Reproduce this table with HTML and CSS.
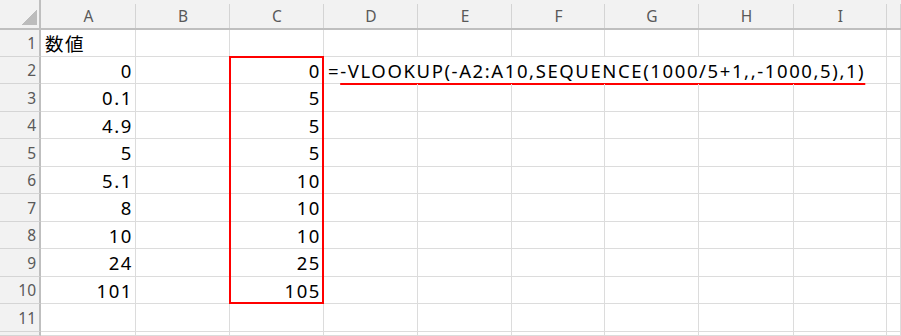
FILE: index.html
```html
<!DOCTYPE html>
<html lang="ja">
<head>
    <meta charset="UTF-8">
    <title>数値</title>
    <link rel="stylesheet" href="styles.css">
</head>
<body>
    <div class="sheet">
        <!-- column headers -->
        <div class="corner"></div>
        <div class="col-head">A</div><div class="col-head">B</div><div class="col-head">C</div>
        <div class="col-head">D</div><div class="col-head">E</div><div class="col-head">F</div>
        <div class="col-head">G</div><div class="col-head">H</div><div class="col-head">I</div>
        <div class="col-head"></div>

        <div class="row-head">1</div>
        <div class="cell">数値</div><div class="cell"></div><div class="cell"></div><div class="cell"></div><div class="cell"></div>
        <div class="cell"></div><div class="cell"></div><div class="cell"></div><div class="cell"></div><div class="cell"></div>

        <div class="row-head">2</div>
        <div class="cell num">0</div><div class="cell"></div>
        <div class="cell num result">0<div class="highlight"></div></div>
        <div class="cell formula">=<span class="marked">-VLOOKUP(-A2:A10,SEQUENCE(1000/5+1,,-1000,5),1)</span></div>
        <div class="cell"></div>

        <div class="row-head">3</div>
        <div class="cell num">0.1</div><div class="cell"></div><div class="cell num">5</div><div class="cell"></div><div class="cell"></div>
        <div class="cell"></div><div class="cell"></div><div class="cell"></div><div class="cell"></div><div class="cell"></div>

        <div class="row-head">4</div>
        <div class="cell num">4.9</div><div class="cell"></div><div class="cell num">5</div><div class="cell"></div><div class="cell"></div>
        <div class="cell"></div><div class="cell"></div><div class="cell"></div><div class="cell"></div><div class="cell"></div>

        <div class="row-head">5</div>
        <div class="cell num">5</div><div class="cell"></div><div class="cell num">5</div><div class="cell"></div><div class="cell"></div>
        <div class="cell"></div><div class="cell"></div><div class="cell"></div><div class="cell"></div><div class="cell"></div>

        <div class="row-head">6</div>
        <div class="cell num">5.1</div><div class="cell"></div><div class="cell num">10</div><div class="cell"></div><div class="cell"></div>
        <div class="cell"></div><div class="cell"></div><div class="cell"></div><div class="cell"></div><div class="cell"></div>

        <div class="row-head">7</div>
        <div class="cell num">8</div><div class="cell"></div><div class="cell num">10</div><div class="cell"></div><div class="cell"></div>
        <div class="cell"></div><div class="cell"></div><div class="cell"></div><div class="cell"></div><div class="cell"></div>

        <div class="row-head">8</div>
        <div class="cell num">10</div><div class="cell"></div><div class="cell num">10</div><div class="cell"></div><div class="cell"></div>
        <div class="cell"></div><div class="cell"></div><div class="cell"></div><div class="cell"></div><div class="cell"></div>

        <div class="row-head">9</div>
        <div class="cell num">24</div><div class="cell"></div><div class="cell num">25</div><div class="cell"></div><div class="cell"></div>
        <div class="cell"></div><div class="cell"></div><div class="cell"></div><div class="cell"></div><div class="cell"></div>

        <div class="row-head">10</div>
        <div class="cell num">101</div><div class="cell"></div><div class="cell num">105</div><div class="cell"></div><div class="cell"></div>
        <div class="cell"></div><div class="cell"></div><div class="cell"></div><div class="cell"></div><div class="cell"></div>

        <div class="row-head">11</div>
        <div class="cell"></div><div class="cell"></div><div class="cell"></div><div class="cell"></div><div class="cell"></div>
        <div class="cell"></div><div class="cell"></div><div class="cell"></div><div class="cell"></div><div class="cell"></div>

        <div class="row-head"></div>
        <div class="cell"></div><div class="cell"></div><div class="cell"></div><div class="cell"></div><div class="cell"></div>
        <div class="cell"></div><div class="cell"></div><div class="cell"></div><div class="cell"></div><div class="cell"></div>
    </div>
</body>
</html>
```

FILE: styles.css
```css
body {
    margin: 0;
    padding: 0;
    background-color: #fff;
    overflow: hidden;
    font-family: "Noto Sans", "Noto Sans CJK JP", sans-serif;
}

.sheet {
    display: grid;
    grid-template-columns: 41px 95px 94px 94px 94px 94px 93px 94px 95px 93px minmax(0, 1fr);
    grid-template-rows: 30px 27px 27px 28px 27px 28px 27px 28px 27px 28px 27px 28px minmax(0, 1fr);
    width: 901px;
    height: 336px;
    overflow: hidden;
}

.sheet > div {
    box-sizing: border-box;
    display: flex;
    align-items: center;
    white-space: nowrap;
    min-width: 0;
    min-height: 0;
}

/* headers */
.corner {
    background: #f2f2f2 linear-gradient(to bottom right, transparent 50%, #bcbcbc 50%) no-repeat right 2px bottom 3px / 15px 15px;
    border-right: 2px solid #bfbfbf;
    border-bottom: 2px solid #bfbfbf;
}

.col-head {
    justify-content: center;
    padding-top: 4px;
    font-size: 15.5px;
    color: #595959;
    background: #f2f2f2 linear-gradient(#d4d4d4, #d4d4d4) no-repeat right bottom / 1px calc(100% - 4px);
    border-bottom: 2px solid #bfbfbf;
}

.row-head {
    justify-content: flex-end;
    padding-right: 3px;
    font-size: 15.5px;
    color: #595959;
    background-color: #f2f2f2;
    border-right: 2px solid #bfbfbf;
    border-bottom: 1px solid #d5d5d5;
}

/* cells */
.cell {
    padding: 0 4px;
    font-size: 18.5px;
    letter-spacing: 1.6px;
    color: #000;
    border-right: 1px solid #dcdcdc;
    border-bottom: 1px solid #dcdcdc;
}

.num {
    justify-content: flex-end;
    padding-right: 2px;
}

.result {
    position: relative;
}

.highlight {
    position: absolute;
    top: -1px;
    left: -1px;
    width: 95px;
    height: 248px;
    box-sizing: border-box;
    border: 2px solid #ff0000;
    pointer-events: none;
}

.formula {
    grid-column: span 6;
}

.marked {
    text-decoration: underline 2px #ff0000;
    text-underline-offset: 5px;
}
```
